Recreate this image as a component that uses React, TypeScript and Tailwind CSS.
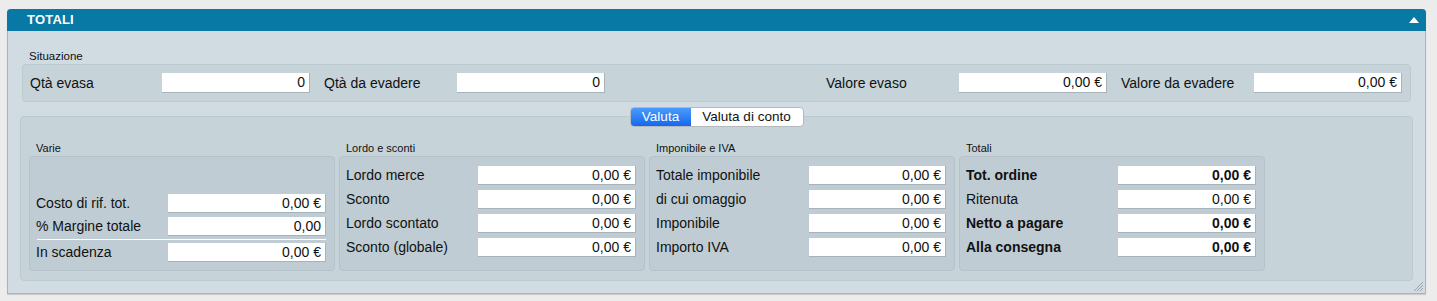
import React from "react";

const font = { fontFamily: '"Liberation Sans", Arial, sans-serif' };

function Input({ value, bold, w }: { value: string; bold?: boolean; w: string }) {
  return (
    <div
      className={`${w} h-[19px] bg-white border-r border-b border-[#a8b3b9] flex items-center justify-end pr-[4px] text-[14px] text-[#111] ${bold ? "font-bold" : ""}`}
    >
      {value}
    </div>
  );
}

function Row({ label, value, bold, inputW }: { label: string; value: string; bold?: boolean; inputW: string }) {
  return (
    <div className="flex items-center justify-between h-[19px]">
      <span className={`text-[14px] text-[#111] ${bold ? "font-bold" : ""}`}>{label}</span>
      <Input value={value} bold={bold} w={inputW} />
    </div>
  );
}

function SubBox({ title, children, className }: { title: string; children: React.ReactNode; className?: string }) {
  return (
    <div className="flex flex-col w-[306px]">
      <div className="h-[14px] pl-[7px] text-[11px] leading-[12px] text-[#111]">{title}</div>
      <div className={`h-[115px] rounded-[4px] bg-[#bfccd3] border border-[#b5c2c9] ${className ?? ""}`}>{children}</div>
    </div>
  );
}

function SitField({ label, value, lw }: { label: string; value: string; lw: string }) {
  return (
    <div className="flex items-center">
      <span className={`${lw} text-[14px] text-[#111]`}>{label}</span>
      <div className="w-[148px] h-[20px] bg-white border-r border-b border-[#a8b3b9] flex items-center justify-end pr-[4px] text-[14px] text-[#111]">
        {value}
      </div>
    </div>
  );
}

export default function App() {
  return (
    <div className="w-[1437px] h-[301px] bg-[#ececec] pt-[9px] pl-[7px]" style={font}>
      <div className="w-[1419px] h-[285px] flex flex-col rounded-t-[4px] border border-t-0 border-[#aab4ba] shadow-[0_1px_1px_rgba(0,0,0,0.15)]">
        <div className="h-[22px] bg-[#0878a4] rounded-t-[4px] flex items-center justify-between pl-[20px] pr-[7px] -mx-[1px]">
          <span className="text-white font-bold text-[13px] tracking-[0.2px]">TOTALI</span>
          <svg width="10" height="6" viewBox="0 0 10 6">
            <polygon points="5,0 10,6 0,6" fill="white" />
          </svg>
        </div>
        <div className="flex-1 bg-[#d0dce2] px-[12px] relative">
          <div className="pt-[19px] h-[33px] pl-[9px] text-[11.5px] leading-[12px] text-[#111]">Situazione</div>
          <div className="mx-[2px] h-[38px] rounded-[4px] bg-[#c6d3d9] border border-[#bccad0] flex items-center justify-between pl-[7px] pr-[8px]">
            <div className="flex items-center gap-[14px]">
              <SitField label="Qtà evasa" value="0" lw="w-[132px]" />
              <SitField label="Qtà da evadere" value="0" lw="w-[133px]" />
            </div>
            <div className="flex items-center gap-[14px]">
              <SitField label="Valore evaso" value="0,00 €" lw="w-[133px]" />
              <SitField label="Valore da evadere" value="0,00 €" lw="w-[133px]" />
            </div>
          </div>
          <div className="relative mt-[14px] h-[165px] rounded-[4px] bg-[#c6d3d9] border border-[#bccad0] pt-[25px] px-[8px]">
            <div className="absolute left-1/2 -translate-x-1/2 top-[-10px] flex h-[20px] rounded-[4px] overflow-hidden border border-[#b4b9bd] bg-white text-[13.5px]">
              <div className="w-[60px] flex items-center justify-center text-white bg-gradient-to-b from-[#4a9bfa] to-[#1467ef]">Valuta</div>
              <div className="w-[112px] flex items-center justify-center text-[#111]">Valuta di conto</div>
            </div>
            <div className="flex gap-[4px]">
              <SubBox title="Varie" className="flex flex-col justify-end pl-[6px] pr-[8px] pb-[8px]">
                <div className="flex flex-col">
                  <Row label="Costo di rif. tot." value="0,00 €" inputW="w-[158px]" />
                  <div className="h-[4px]" />
                  <Row label="% Margine totale" value="0,00" inputW="w-[158px]" />
                  <div className="h-[7px] flex items-center pl-[1px]">
                    <div className="h-[1px] w-full bg-white" />
                  </div>
                  <Row label="In scadenza" value="0,00 €" inputW="w-[158px]" />
                </div>
              </SubBox>
              <SubBox title="Lordo e sconti" className="flex flex-col gap-[5px] pt-[9px] pl-[6px] pr-[8px]">
                <Row label="Lordo merce" value="0,00 €" inputW="w-[158px]" />
                <Row label="Sconto" value="0,00 €" inputW="w-[158px]" />
                <Row label="Lordo scontato" value="0,00 €" inputW="w-[158px]" />
                <Row label="Sconto (globale)" value="0,00 €" inputW="w-[158px]" />
              </SubBox>
              <SubBox title="Imponibile e IVA" className="flex flex-col gap-[5px] pt-[9px] pl-[6px] pr-[8px]">
                <Row label="Totale imponibile" value="0,00 €" inputW="w-[137px]" />
                <Row label="di cui omaggio" value="0,00 €" inputW="w-[137px]" />
                <Row label="Imponibile" value="0,00 €" inputW="w-[137px]" />
                <Row label="Importo IVA" value="0,00 €" inputW="w-[137px]" />
              </SubBox>
              <SubBox title="Totali" className="flex flex-col gap-[5px] pt-[9px] pl-[6px] pr-[8px]">
                <Row label="Tot. ordine" value="0,00 €" bold inputW="w-[138px]" />
                <Row label="Ritenuta" value="0,00 €" inputW="w-[138px]" />
                <Row label="Netto a pagare" value="0,00 €" bold inputW="w-[138px]" />
                <Row label="Alla consegna" value="0,00 €" bold inputW="w-[138px]" />
              </SubBox>
            </div>
          </div>
          <svg className="absolute right-[1px] bottom-[1px]" width="11" height="11" viewBox="0 0 11 11">
            <line x1="10" y1="1" x2="1" y2="10" stroke="#9aa5ab" strokeWidth="1" />
            <line x1="10" y1="4" x2="4" y2="10" stroke="#9aa5ab" strokeWidth="1" />
            <line x1="10" y1="7" x2="7" y2="10" stroke="#9aa5ab" strokeWidth="1" />
          </svg>
        </div>
      </div>
    </div>
  );
}
